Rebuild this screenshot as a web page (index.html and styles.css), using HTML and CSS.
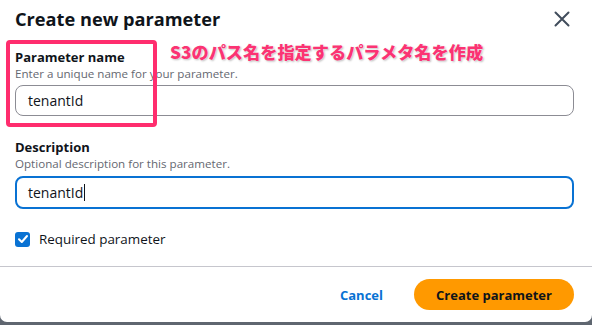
FILE: index.html
```html
<!DOCTYPE html>
<html>
<head>
<meta charset="utf-8">
<link rel="stylesheet" href="styles.css">
</head>
<body>
<div class="modal">
  <div class="header">
    <h2 class="title">Create new parameter</h2>
    <button class="close" aria-label="Close">
      <svg width="16" height="16" viewBox="0 0 16 16"><path d="M1.5 1.5 L14.5 14.5 M14.5 1.5 L1.5 14.5" stroke="#414d5c" stroke-width="2" fill="none" stroke-linecap="round"/></svg>
    </button>
  </div>
  <div class="content">
    <div class="field">
      <div class="label">Parameter name</div>
      <div class="desc">Enter a unique name for your parameter.</div>
      <div class="input">tenantId</div>
    </div>
    <div class="field">
      <div class="label">Description</div>
      <div class="desc">Optional description for this parameter.</div>
      <div class="input focused">tenantId<span class="caret"></span></div>
    </div>
    <label class="check">
      <span class="box"><svg width="12" height="12" viewBox="0 0 12 12"><path d="M2 6.2 L4.8 9 L10 3" stroke="#fff" stroke-width="2" fill="none" stroke-linecap="round" stroke-linejoin="round"/></svg></span>
      <span>Required parameter</span>
    </label>
  </div>
  <div class="footer">
    <button class="cancel">Cancel</button>
    <button class="primary">Create parameter</button>
  </div>
  <div class="highlight"></div>
  <div class="note">S3のパス名を指定するパラメタ名を作成</div>
</div>
</body>
</html>
```
FILE: styles.css
```css
html, body {
  margin: 0;
  padding: 0;
}
body {
  width: 592px;
  height: 325px;
  background: #5f6670;
  font-family: "Open Sans", "Noto Sans", sans-serif;
  color: #0f141a;
  overflow: hidden;
}
.modal {
  position: relative;
  width: 592px;
  height: 322px;
  background: #fff;
  border-radius: 0 0 7px 7px;
  display: flex;
  flex-direction: column;
}
.header {
  display: flex;
  align-items: center;
  justify-content: space-between;
  padding: 2px 22px 0 15px;
  height: 34px;
}
.title {
  margin: 0;
  font-size: 18.2px;
  font-weight: 700;
}
.close {
  border: none;
  background: none;
  padding: 0;
  width: 16px;
  height: 16px;
  display: flex;
  margin-top: -1px;
}
.content {
  padding: 12px 18px 0 15px;
  display: flex;
  flex-direction: column;
}
.field {
  display: flex;
  flex-direction: column;
  margin-bottom: 22px;
}
.label {
  font-size: 13px;
  font-weight: 700;
  line-height: 18px;
}
.desc {
  font-size: 11.6px;
  color: #656871;
  line-height: 15px;
}
.input {
  margin-top: 4px;
  height: 31px;
  box-sizing: border-box;
  border: 1px solid #8c8c94;
  border-radius: 8px;
  padding: 0 12px;
  font-size: 14px;
  display: flex;
  align-items: center;
}
.input.focused {
  border: 2px solid #0972d3;
  height: 33px;
  padding: 0 11px;
  margin-top: 5px;
}
.caret {
  display: inline-block;
  width: 1px;
  height: 17px;
  background: #0f141a;
  margin-left: 1px;
}
.check {
  display: flex;
  align-items: center;
  gap: 9px;
  font-size: 13.4px;
  margin-top: -1px;
}
.box {
  width: 15px;
  height: 15px;
  border-radius: 3px;
  background: #0972d3;
  display: flex;
  align-items: center;
  justify-content: center;
}
.footer {
  margin-top: auto;
  border-top: 1px solid #c6c6cd;
  height: 55px;
  display: flex;
  align-items: center;
  justify-content: flex-end;
  gap: 31px;
  padding: 0 18px 0 0;
}
.cancel {
  border: none;
  background: none;
  font-family: inherit;
  font-size: 13px;
  font-weight: 700;
  color: #0972d3;
  padding: 0;
}
.primary {
  border: none;
  background: #ff9900;
  color: #0f141a;
  font-family: inherit;
  font-size: 13px;
  font-weight: 700;
  border-radius: 16px;
  width: 160px;
  height: 31px;
}
.highlight {
  position: absolute;
  left: 6px;
  top: 40px;
  width: 143px;
  height: 79px;
  border: 4px solid #ff2d6e;
  border-radius: 4px;
}
.note {
  position: absolute;
  left: 170px;
  top: 42px;
  line-height: 20px;
  font-family: "Noto Sans CJK JP", sans-serif;
  font-size: 17.2px;
  font-weight: 900;
  color: #fb3373;
  text-shadow: 0 0 2px #fff, 1px 1px 2px rgba(0,0,0,0.3);
}
```
